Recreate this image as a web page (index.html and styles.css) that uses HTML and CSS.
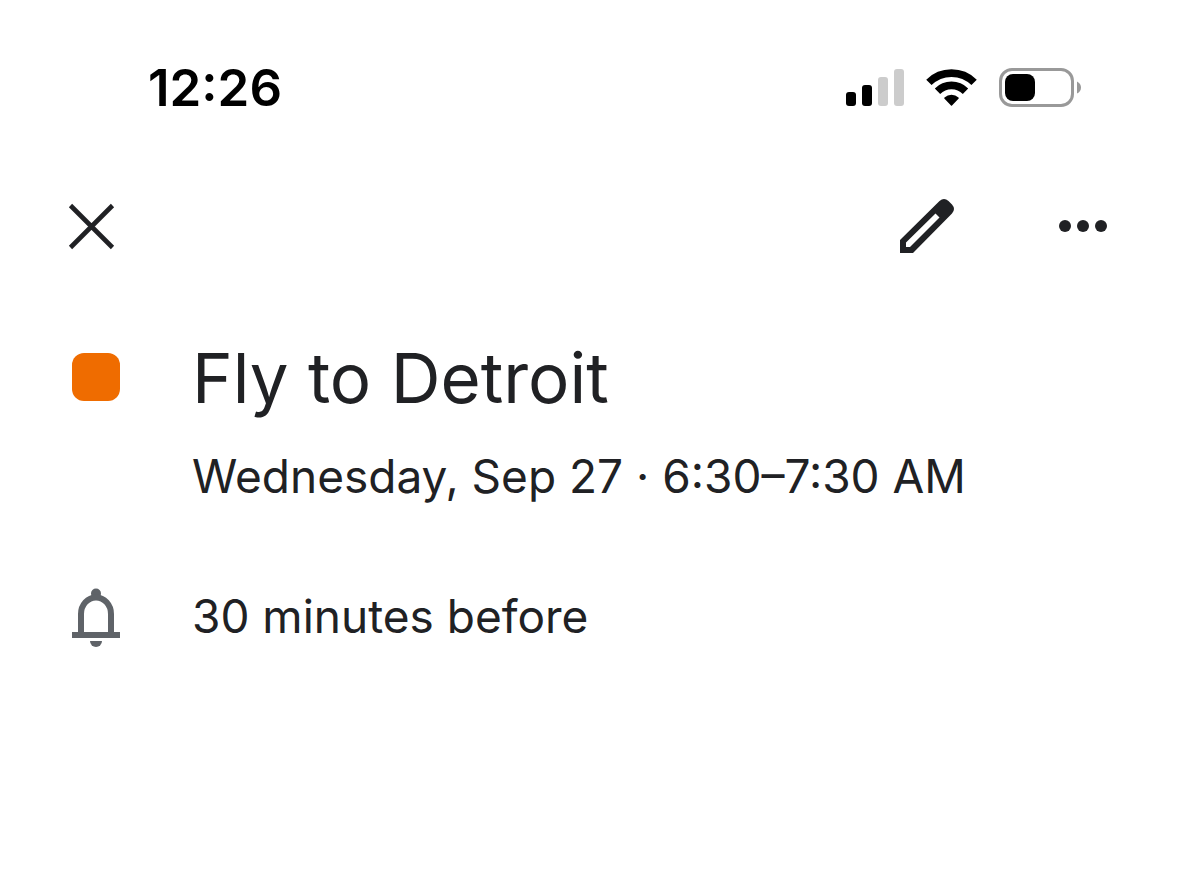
FILE: index.html
```html
<!DOCTYPE html>
<html lang="en">
<head>
<meta charset="utf-8">
<meta name="viewport" content="width=device-width, initial-scale=1">
<title>Fly to Detroit</title>
<link rel="stylesheet" href="styles.css">
</head>
<body>
<header class="status-bar">
  <time class="clock">12:26</time>
  <div class="indicators">
    <svg class="signal" viewBox="0 0 58 40" role="img" aria-label="Signal strength">
      <g fill="#000"><rect x="0" y="24" width="10" height="14" rx="3"/><rect x="16" y="17" width="10" height="21" rx="3"/></g>
      <g fill="#ccc"><rect x="32" y="9" width="10" height="29" rx="3"/><rect x="48" y="1" width="10" height="37" rx="3"/></g>
    </svg>
    <svg class="wifi" viewBox="0 0 51 40" role="img" aria-label="Wi-Fi">
      <g fill="none" stroke="#000" stroke-width="7.6">
        <path d="M2.9 14.4A32.200 32.200 0 0 1 48.100 14.400"/>
        <path d="M11.500 23.200A19.800 19.800 0 0 1 39.500 23.200"/>
      </g>
      <path d="M18.300 30.400Q18 29.800 18.500 29.400A10.600 10.600 0 0 1 32.500 29.400Q33 29.800 32.700 30.400L26 37.600Q25.500 38.100 25 37.600Z" fill="#000"/>
    </svg>
    <svg class="battery" viewBox="0 0 82 40" role="img" aria-label="Battery">
      <rect x="1.500" y="1.500" width="72" height="36" rx="11.500" fill="none" stroke="#999" stroke-width="3"/>
      <rect x="6" y="6" width="30" height="27" rx="8" fill="#000"/>
      <path d="M78 13.500Q82 15.500 82 19.500T78 25.500Z" fill="#999"/>
    </svg>
  </div>
</header>
<nav class="toolbar">
  <button class="icon-button" type="button" aria-label="Close">
    <svg viewBox="0 0 54 54"><path d="M5.500 6.500L47.500 48.500M47.500 6.500L5.500 48.500" fill="none" stroke="#202124" stroke-width="4.600"/></svg>
  </button>
  <div class="actions">
    <button class="icon-button" type="button" aria-label="Edit">
      <svg viewBox="0 0 54 54"><path fill="#202124" fill-rule="evenodd" d="M0 54V41L39.500 2Q44 -2 48.500 2L52 5.500Q56 10 52 14.500L13 54ZM6 48H10L39.500 18.500L35.500 14.500L6 43.500Z"/></svg>
    </button>
    <button class="icon-button" type="button" aria-label="More options">
      <svg viewBox="0 0 54 54"><g fill="#202124"><circle cx="9" cy="27" r="6"/><circle cx="27" cy="27" r="6"/><circle cx="45" cy="27" r="6"/></g></svg>
    </button>
  </div>
</nav>
<main class="event">
  <section class="row">
    <span class="swatch"></span>
    <div class="details">
      <h1 class="title">Fly to Detroit</h1>
      <p class="text">Wednesday, Sep 27 · 6:30–7:30 AM</p>
    </div>
  </section>
  <section class="row">
    <svg class="bell" viewBox="0 0 48 60" aria-hidden="true">
      <g fill="#5f6368"><circle cx="24" cy="7.500" r="5"/><rect y="46" width="48" height="6"/><path d="M18 55H30A6 6 0 0 1 18 55Z"/></g>
      <path d="M9 48V28A15 16.500 0 0 1 39 28V48" fill="none" stroke="#5f6368" stroke-width="6"/>
    </svg>
    <p class="text">30 minutes before</p>
  </section>
</main>
</body>
</html>
```
FILE: styles.css
```css
* {
  box-sizing: border-box;
}

body {
  margin: 0;
  background: #fff;
  color: #202124;
  font-family: Inter, "Liberation Sans", sans-serif;
}

svg {
  display: block;
  overflow: visible;
}

.status-bar {
  display: flex;
  align-items: center;
  justify-content: space-between;
  padding: 56px 98px 0 148px;
}

.clock {
  color: #000;
  font-size: 51px;
  font-weight: 600;
  line-height: 64px;
}

.indicators {
  display: flex;
  align-items: center;
  gap: 22px;
}

.signal {
  width: 58px;
  height: 40px;
}

.wifi {
  width: 51px;
  height: 40px;
}

.battery {
  width: 82px;
  height: 40px;
}

.toolbar {
  display: flex;
  justify-content: space-between;
  padding: 79px 69px 0 65px;
}

.actions {
  display: flex;
  gap: 102px;
}

.icon-button {
  width: 54px;
  height: 54px;
  padding: 0;
  border: 0;
  background: none;
}

.event {
  display: grid;
  gap: 80px;
  padding: 81px 72px;
}

.row {
  display: grid;
  grid-template-columns: 48px 1fr;
  column-gap: 72px;
}

.swatch {
  width: 48px;
  height: 48px;
  margin-top: 19px;
  border-radius: 12px;
  background: #ef6c00;
}

.bell {
  width: 48px;
  height: 60px;
}

.title,
.text {
  margin: 0;
  font-weight: 400;
}

.title {
  font-size: 69px;
  line-height: 88px;
}

.text {
  font-size: 46px;
  line-height: 60px;
}

.details {
  display: grid;
  gap: 24px;
}
```
